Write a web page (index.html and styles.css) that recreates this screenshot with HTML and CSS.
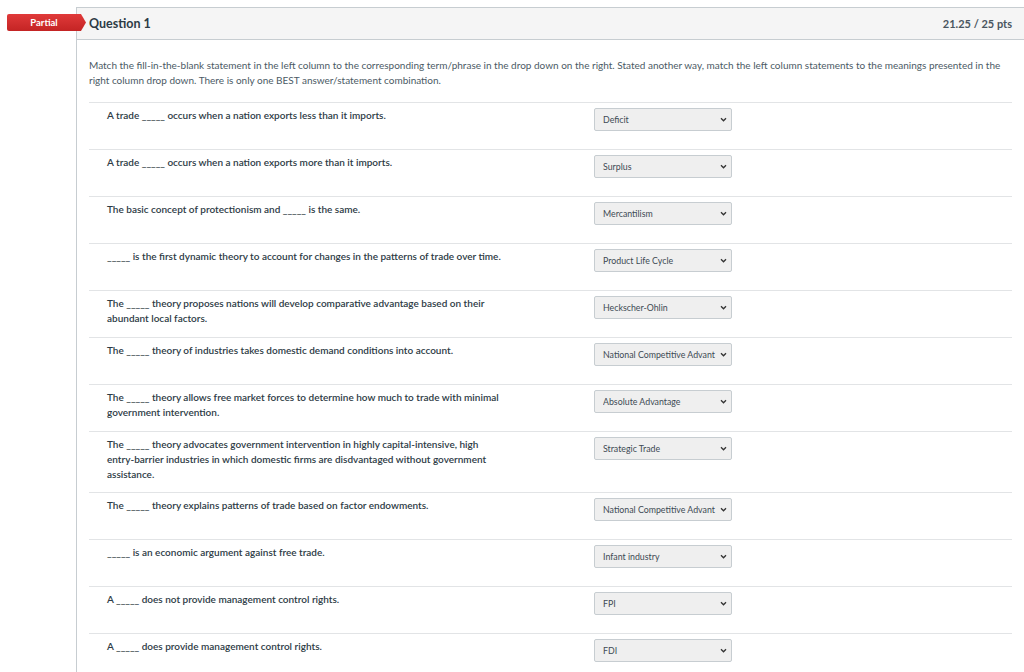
FILE: index.html
```html
<!DOCTYPE html>
<html>
<head>
<meta charset="utf-8">
<link rel="stylesheet" href="styles.css">
</head>
<body>
<div class="page">
  <div class="badge"><span>Partial</span></div>
  <div class="card">
    <div class="card-header">
      <span class="q-title">Question 1</span>
      <span class="q-pts">21.25 / 25 pts</span>
    </div>
    <div class="card-body">
      <p class="desc">Match the fill-in-the-blank statement in the left column to the corresponding term/phrase in the drop down on the right. Stated another way, match the left column statements to the meanings presented in the right column drop down. There is only one BEST answer/statement combination.</p>
      <div class="rows">
        <div class="row"><div class="stmt">A trade _____ occurs when a nation exports less than it imports.</div><div class="sel"><span class="val">Deficit</span><svg class="chev" viewBox="0 0 8 6" width="7" height="5"><path d="M1 1.5 L4 4.5 L7 1.5" fill="none" stroke="#333" stroke-width="1.6"/></svg></div></div>
        <div class="row"><div class="stmt">A trade _____ occurs when a nation exports more than it imports.</div><div class="sel"><span class="val">Surplus</span><svg class="chev" viewBox="0 0 8 6" width="7" height="5"><path d="M1 1.5 L4 4.5 L7 1.5" fill="none" stroke="#333" stroke-width="1.6"/></svg></div></div>
        <div class="row"><div class="stmt">The basic concept of protectionism and _____ is the same.</div><div class="sel"><span class="val">Mercantilism</span><svg class="chev" viewBox="0 0 8 6" width="7" height="5"><path d="M1 1.5 L4 4.5 L7 1.5" fill="none" stroke="#333" stroke-width="1.6"/></svg></div></div>
        <div class="row"><div class="stmt">_____ is the first dynamic theory to account for changes in the patterns of trade over time.</div><div class="sel"><span class="val">Product Life Cycle</span><svg class="chev" viewBox="0 0 8 6" width="7" height="5"><path d="M1 1.5 L4 4.5 L7 1.5" fill="none" stroke="#333" stroke-width="1.6"/></svg></div></div>
        <div class="row"><div class="stmt">The _____ theory proposes nations will develop comparative advantage based on their abundant local factors.</div><div class="sel"><span class="val">Heckscher-Ohlin</span><svg class="chev" viewBox="0 0 8 6" width="7" height="5"><path d="M1 1.5 L4 4.5 L7 1.5" fill="none" stroke="#333" stroke-width="1.6"/></svg></div></div>
        <div class="row"><div class="stmt">The _____ theory of industries takes domestic demand conditions into account.</div><div class="sel"><span class="val">National Competitive Advant</span><svg class="chev" viewBox="0 0 8 6" width="7" height="5"><path d="M1 1.5 L4 4.5 L7 1.5" fill="none" stroke="#333" stroke-width="1.6"/></svg></div></div>
        <div class="row"><div class="stmt">The _____ theory allows free market forces to determine how much to trade with minimal government intervention.</div><div class="sel"><span class="val">Absolute Advantage</span><svg class="chev" viewBox="0 0 8 6" width="7" height="5"><path d="M1 1.5 L4 4.5 L7 1.5" fill="none" stroke="#333" stroke-width="1.6"/></svg></div></div>
        <div class="row"><div class="stmt">The _____ theory advocates government intervention in highly capital-intensive, high entry-barrier industries in which domestic firms are disdvantaged without government assistance.</div><div class="sel"><span class="val">Strategic Trade</span><svg class="chev" viewBox="0 0 8 6" width="7" height="5"><path d="M1 1.5 L4 4.5 L7 1.5" fill="none" stroke="#333" stroke-width="1.6"/></svg></div></div>
        <div class="row"><div class="stmt">The _____ theory explains patterns of trade based on factor endowments.</div><div class="sel"><span class="val">National Competitive Advant</span><svg class="chev" viewBox="0 0 8 6" width="7" height="5"><path d="M1 1.5 L4 4.5 L7 1.5" fill="none" stroke="#333" stroke-width="1.6"/></svg></div></div>
        <div class="row"><div class="stmt">_____ is an economic argument against free trade.</div><div class="sel"><span class="val">Infant industry</span><svg class="chev" viewBox="0 0 8 6" width="7" height="5"><path d="M1 1.5 L4 4.5 L7 1.5" fill="none" stroke="#333" stroke-width="1.6"/></svg></div></div>
        <div class="row"><div class="stmt">A _____ does not provide management control rights.</div><div class="sel"><span class="val">FPI</span><svg class="chev" viewBox="0 0 8 6" width="7" height="5"><path d="M1 1.5 L4 4.5 L7 1.5" fill="none" stroke="#333" stroke-width="1.6"/></svg></div></div>
        <div class="row"><div class="stmt">A _____ does provide management control rights.</div><div class="sel"><span class="val">FDI</span><svg class="chev" viewBox="0 0 8 6" width="7" height="5"><path d="M1 1.5 L4 4.5 L7 1.5" fill="none" stroke="#333" stroke-width="1.6"/></svg></div></div>
      </div>
    </div>
  </div>
</div>
</body>
</html>
```

FILE: styles.css
```css
html, body {
  margin: 0;
  padding: 0;
  background: #fff;
  overflow: hidden;
}
body {
  font-family: Lato, "Liberation Sans", sans-serif;
  color: #2d3b45;
}
.page {
  position: relative;
  padding-top: 7px;
  height: 665px;
  overflow: hidden;
}
.badge {
  position: absolute;
  left: 7px;
  top: 14px;
  width: 79px;
  height: 17px;
  background: linear-gradient(#e03a3a, #c42424);
  clip-path: polygon(0 0, 74px 0, 79px 50%, 74px 100%, 0 100%);
  border-radius: 2px 0 0 2px;
  display: flex;
  align-items: center;
}
.badge span {
  color: #fff;
  font-weight: 700;
  font-size: 9.5px;
  width: 74px;
  text-align: center;
}
.card {
  margin-left: 76px;
  width: 949px;
  box-sizing: border-box;
  border: 1px solid #c7cdd1;
  border-bottom: none;
  height: 700px;
}
.card-header {
  background: #f5f5f5;
  border-bottom: 1px solid #c7cdd1;
  height: 31px;
  padding: 0 12px;
  display: flex;
  align-items: center;
  justify-content: space-between;
}
.q-title {
  font-size: 12.5px;
  font-weight: 700;
  color: #2d3b45;
}
.q-pts {
  font-size: 11px;
  font-weight: 700;
  color: #4a5660;
}
.card-body {
  padding: 0 12px;
}
.desc {
  margin: 0;
  padding: 18px 0 14px;
  font-size: 10px;
  line-height: 15px;
  color: #4b5a65;
}
.row {
  border-top: 1px solid #e2e4e6;
  display: flex;
  align-items: flex-start;
  padding: 5px 0 10px 18px;
  min-height: 47px;
  box-sizing: border-box;
}
.stmt {
  width: 400px;
  font-size: 10px;
  font-weight: 600;
  line-height: 15px;
  color: #2d3b45;
}
.sel {
  margin-left: 87px;
  width: 138px;
  height: 23px;
  box-sizing: border-box;
  border: 1px solid #c7cdd1;
  border-radius: 2px;
  background: #efefef;
  display: flex;
  align-items: center;
  padding: 0 4px 0 8px;
}
.val {
  flex: 1;
  min-width: 0;
  overflow: hidden;
  white-space: nowrap;
  font-size: 8.8px;
  color: #3d4a54;
}
.chev {
  flex: none;
  margin-left: 3px;
}
```
